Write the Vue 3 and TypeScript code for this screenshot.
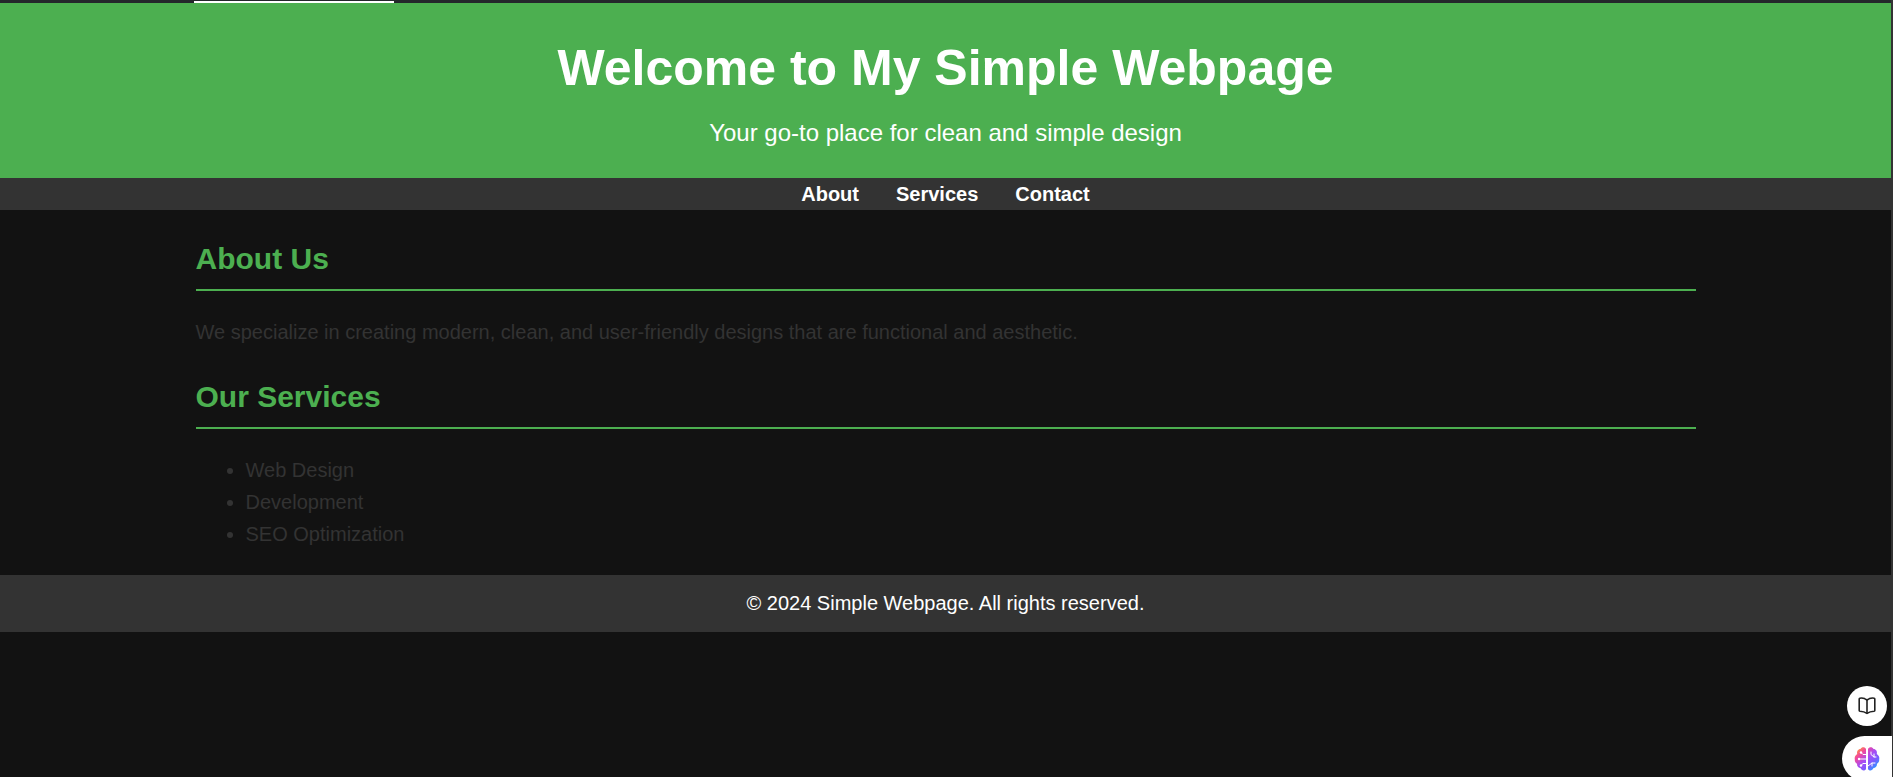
<script setup lang="ts">
interface NavLink {
  label: string
  href: string
}

const links: NavLink[] = [
  { label: 'About', href: '#about' },
  { label: 'Services', href: '#services' },
  { label: 'Contact', href: '#contact' },
]

const services: string[] = ['Web Design', 'Development', 'SEO Optimization']
</script>

<template>
  <div class="window">
    <div class="tabstrip"><span class="tab"></span></div>
    <div class="page">
      <header class="hero">
        <h1>Welcome to My Simple Webpage</h1>
        <p>Your go-to place for clean and simple design</p>
      </header>
      <nav class="nav">
        <a v-for="link in links" :key="link.href" :href="link.href">{{ link.label }}</a>
      </nav>
      <main class="content">
        <section id="about">
          <h2>About Us</h2>
          <p>We specialize in creating modern, clean, and user-friendly designs that are functional and aesthetic.</p>
        </section>
        <section id="services">
          <h2>Our Services</h2>
          <ul>
            <li v-for="service in services" :key="service">{{ service }}</li>
          </ul>
        </section>
      </main>
      <footer id="contact" class="footer">
        <p>© 2024 Simple Webpage. All rights reserved.</p>
      </footer>
    </div>
    <button class="reader" type="button" aria-label="Reader">
      <svg viewBox="0 0 20 20" width="20" height="20" fill="none" stroke="#222" stroke-width="1.6" stroke-linejoin="round" stroke-linecap="round">
        <path d="M10 4 L7.500 2.600 C6 2 4 2 2.800 2.200 Q2.200 2.300 2.200 3 V14.400 Q2.200 15.100 3 15.200 C5.500 15.300 8 16 10 17.400 C12 16 14.500 15.300 17 15.200 Q17.800 15.100 17.800 14.400 V3 Q17.800 2.300 17.200 2.200 C16 2 14 2 12.500 2.600 Z" />
        <path d="M10 4 V17" />
      </svg>
    </button>
    <button class="assistant" type="button" aria-label="Assistant">
      <svg viewBox="0 0 26 26" width="26" height="26">
        <defs>
          <linearGradient id="brain" gradientUnits="userSpaceOnUse" x1="4" y1="2" x2="23" y2="22">
            <stop offset="0" stop-color="#ff9a3c" />
            <stop offset="0.22" stop-color="#f2489b" />
            <stop offset="0.5" stop-color="#a64df5" />
            <stop offset="0.75" stop-color="#7a5cff" />
            <stop offset="1" stop-color="#1fa2ff" />
          </linearGradient>
        </defs>
        <path fill="url(#brain)" d="M12 3 C11 .8 7.500 .8 6.500 3 C4 3 2.500 5.500 3.200 8 C1 9.500 .3 11.500 .8 13.500 C.6 15.500 1.500 17 3 17.800 C2.800 20.500 4.500 22 6.500 22 C7.500 25 11 25.200 12 23 Z M14 3 C15 .8 18.500 .8 19.500 3 C22 3 23.500 5.500 22.800 8 C25 9.500 25.700 11.500 25.200 13.500 C25.400 15.500 24.500 17 23 17.800 C23.200 20.500 21.500 22 19.500 22 C18.500 25 15 25.200 14 23 Z" />
        <g fill="none" stroke="#fff" stroke-width="1" stroke-linecap="round" stroke-linejoin="round">
          <path d="M12 8.500 H9 L7 6.500 M12 13 H5 M12 17.500 H9 L7 19.500 M17 6 V8.500 L20 11 H22 M20 11 V8 M14 20 L18 17 H21 M18 17 V20" />
        </g>
        <g fill="#fff">
          <circle cx="7" cy="6.500" r="1.200" />
          <circle cx="5" cy="13" r="1.200" />
          <circle cx="7" cy="19.500" r="1.200" />
        </g>
      </svg>
    </button>
  </div>
</template>

<style>
body {
  margin: 0;
  background: #121212;
}
</style>

<style scoped>
.window {
  box-sizing: border-box;
  min-height: 100vh;
  border-right: 2px solid #333;
  background: #121212;
  color: #333;
  font: 20px/32px "Liberation Sans", Arial, sans-serif;
}

.tabstrip {
  display: flex;
  align-items: flex-end;
  height: 3px;
  padding-left: 194px;
  background: #24272b;
}

.tab {
  width: 200px;
  height: 2px;
  background: #fff;
}

h1,
h2,
p,
ul {
  margin: 0;
}

.hero {
  padding: 25px 25px 26px;
  background: #4caf50;
  color: #fff;
  text-align: center;
}

.hero h1 {
  margin-bottom: 6px;
  font-size: 50px;
  line-height: 80px;
}

.hero p {
  font-size: 24px;
  line-height: 38px;
}

.nav {
  display: flex;
  justify-content: center;
  gap: 37px;
  background: #333;
}

.nav a {
  color: #fff;
  font-weight: bold;
  text-decoration: none;
}

.content {
  display: flex;
  flex-direction: column;
  gap: 25px;
  max-width: 1500px;
  margin: 0 auto;
  padding: 25px;
}

h2 {
  margin-bottom: 25px;
  padding-bottom: 6px;
  border-bottom: 2px solid #4caf50;
  color: #4caf50;
  font-size: 30px;
  line-height: 48px;
}

ul {
  padding-left: 50px;
}

.footer {
  padding: 12px 25px 13px;
  background: #333;
  color: #fff;
  text-align: center;
}

button {
  display: flex;
  align-items: center;
  border: 0;
  background: #fff;
}

.reader {
  position: fixed;
  right: 6px;
  bottom: 51px;
  justify-content: center;
  width: 40px;
  height: 40px;
  padding: 0;
  border-radius: 50%;
}

.assistant {
  position: fixed;
  right: 1px;
  bottom: -4px;
  width: 50px;
  height: 45px;
  padding: 0 0 0 12px;
  border-radius: 23px 0 0 23px;
}
</style>
